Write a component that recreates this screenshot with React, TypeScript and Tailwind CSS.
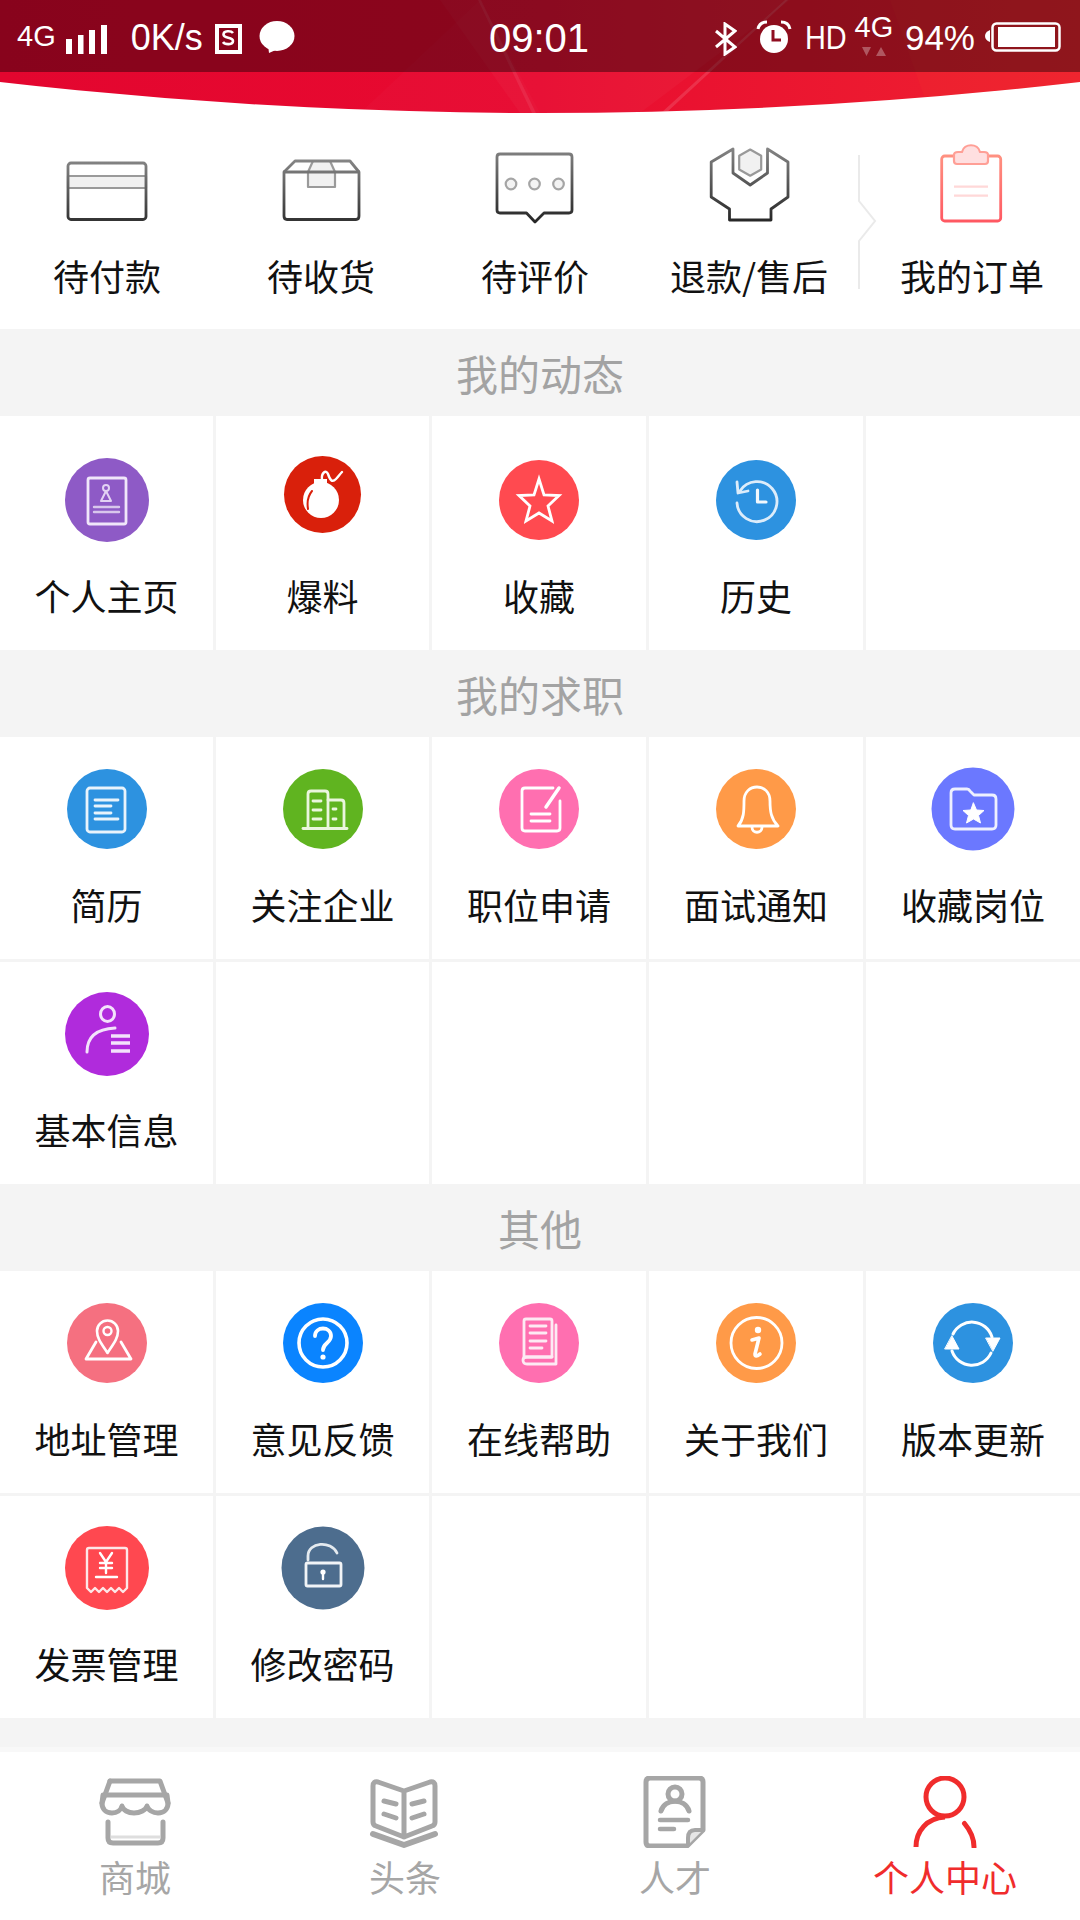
import React from "react";

const FONT = "font-['Noto_Sans_CJK_SC','Noto_Sans',sans-serif]";

function Bubble({ color, r, cx = 42, cy = 42, children }: { color: string; r: number; cx?: number; cy?: number; children: React.ReactNode }) {
  return (
    <svg viewBox="0 0 84 84" className="w-[84px] h-[84px] mb-[28px] shrink-0 overflow-visible" fill="none" stroke="#fff" strokeWidth={2.8} strokeLinecap="round" strokeLinejoin="round">
      <circle cx={cx} cy={cy} r={r} fill={color} stroke="none" />
      {children}
    </svg>
  );
}

const icons: Record<string, React.ReactNode> = {
  home: (
    <Bubble color="#8e5ac6" r={42}>
      <rect x="23" y="20" width="38" height="46" rx="2" stroke="#f0e6fa" strokeWidth="2.8" />
      <circle cx="41" cy="30" r="3" stroke="#e2d2f3" strokeWidth="2" />
      <path d="M41 33 L36 43 H46 Z" stroke="#e2d2f3" strokeWidth="2" />
      <path d="M29 49 H54 M29 54 H54" stroke="#d8c6ec" strokeWidth="2.4" />
    </Bubble>
  ),
  bomb: (
    <Bubble color="#d9200b" r={38.5} cy={36.5} cx={41.5}>
      <circle cx="40" cy="42" r="18" fill="#fff" stroke="none" />
      <rect x="33" y="21" width="13" height="6" fill="#fff" stroke="none" />
      <path d="M41 22 C40 15 45 11 47 16 C49 22 51 25 55 21 C57 19 59 16 61 14" strokeWidth="2.4" />
      <path d="M31 33 C26 39 26 45 27 51" stroke="#d9200b" strokeWidth="2" />
    </Bubble>
  ),
  star: (
    <Bubble color="#ff4a50" r={40}>
      <path d="M42 21 L47 37 L62 37.5 L51 48 L55 63 L42 55 L29 63 L33 48 L22 37.5 L37 37 Z" strokeWidth="2.8" strokeLinejoin="miter" />
    </Bubble>
  ),
  history: (
    <Bubble color="#2d92e0" r={40}>
      <path d="M26 33 A20 20 0 1 1 23 45" stroke="#dcecfa" strokeWidth="2.8" />
      <path d="M23 24 L24 35 L34 33" stroke="#dcecfa" strokeWidth="2.8" />
      <path d="M43.5 32 V44 H52" stroke="#f2f8fd" strokeWidth="3.2" />
    </Bubble>
  ),
  resume: (
    <Bubble color="#2d92e0" r={40}>
      <rect x="22" y="21" width="38" height="44" rx="3" stroke="#e8f3fc" />
      <path d="M30 33 H53 M30 39 H46 M30 46 H46 M30 52 H53" stroke="#e8f3fc" />
    </Bubble>
  ),
  company: (
    <Bubble color="#60b420" r={40}>
      <path d="M27 61 V27 Q27 24 30 24 H44 Q47 24 47 27 V61" stroke="#eaf6de" />
      <path d="M47 33 H60 Q63 33 63 36 V61" stroke="#eaf6de" />
      <path d="M22 61.5 H66" stroke="#eaf6de" />
      <path d="M32 34 H40 M32 43 H40 M32 52 H40 M52 42 H55 M52 52 H55" stroke="#eaf6de" strokeWidth="2.8" />
    </Bubble>
  ),
  apply: (
    <Bubble color="#ff6fb0" r={40}>
      <path d="M56 21 H28 Q25 21 25 24 V61 Q25 64 28 64 H60 Q63 64 63 61 V34" stroke="#fff" />
      <path d="M62 21 L49 40" strokeWidth="3.5" />
      <path d="M34 47 H53 M34 54 H53" strokeWidth="2.8" />
    </Bubble>
  ),
  bell: (
    <Bubble color="#ff9a48" r={40}>
      <path d="M24 59 C30 52 30 44 30 34 C30 25 36 20 43 20 C50 20 56 25 56 34 C56 44 57 52 64 59 Z" />
      <path d="M38 60 C38 67 48 67 48 60" />
    </Bubble>
  ),
  folder: (
    <Bubble color="#6b78ff" r={41.5}>
      <path d="M20 26 Q20 22 24 22 H36 Q38 22 39 24 L43 28 H61 Q65 28 65 32 V58 Q65 62 61 62 H24 Q20 62 20 58 Z" stroke="#eef0ff" strokeWidth="2.8" />
      <path d="M42.5 36 L45.5 43 L53 43.5 L47.5 48.5 L49.5 56 L42.5 52 L35.5 56 L37.5 48.5 L32 43.5 L39.5 43 Z" fill="#fff" stroke="#fff" strokeWidth="1" />
    </Bubble>
  ),
  info: (
    <Bubble color="#b02bdc" r={42}>
      <ellipse cx="42.5" cy="22" rx="7" ry="7.5" strokeWidth="3" stroke="#f3e2fb" />
      <path d="M22 60 C22 46 30 37 50 36" strokeWidth="3" stroke="#f3e2fb" />
      <path d="M46 44 H65 M46 51 H65 M46 59 H65" strokeWidth="3.4" strokeLinecap="butt" stroke="#f3e2fb" />
    </Bubble>
  ),
  map: (
    <Bubble color="#f57080" r={40}>
      <path d="M31 41 L21 58 H66 L56 41" stroke="#fff" strokeWidth="2.8" />
      <path d="M42.5 52 C36 42 32 37 32 30 A10.5 10.5 0 0 1 53 30 C53 37 49 42 42.5 52 Z" fill="#f57080" strokeWidth="2.6" />
      <circle cx="42.5" cy="30" r="4" strokeWidth="2.4" />
    </Bubble>
  ),
  question: (
    <Bubble color="#0a84ff" r={40}>
      <circle cx="42" cy="42" r="24" strokeWidth="3.6" />
      <path d="M34 35 C34 25 50 25 50 35 C50 42 42 42 42 49" strokeWidth="3.8" />
      <circle cx="42" cy="56" r="2.6" fill="#fff" stroke="none" />
    </Bubble>
  ),
  help: (
    <Bubble color="#ff6fb0" r={40}>
      <path d="M27 56 V20 Q27 18 29 18 H53 Q55 18 55 20 V56 Z" stroke="#fdeaf3" />
      <path d="M59 24 V63 H30 Q26 63 26 59 Q26 56 30 56 H55" stroke="#fdeaf3" />
      <path d="M33 25 H49 M33 32 H49 M33 40 H49 M33 47 H45" stroke="#fdeaf3" />
    </Bubble>
  ),
  about: (
    <Bubble color="#ff9a48" r={40}>
      <circle cx="42.5" cy="42" r="25.5" strokeWidth="2.8" />
      <circle cx="44" cy="29" r="3.2" fill="#fff" stroke="none" />
      <path d="M38 39 L45 37 L41 53 Q41 57 46 53" strokeWidth="3.6" />
    </Bubble>
  ),
  update: (
    <Bubble color="#2d92e0" r={40}>
      <path d="M22 33 A21 21 0 0 1 61 36" strokeWidth="3" />
      <path d="M60 52 A21 21 0 0 1 21 50" strokeWidth="3" />
      <path d="M55 37 L69 37 L62 50 Z" fill="#fff" stroke="#fff" strokeWidth="1" />
      <path d="M14 48 L28 48 L21 35 Z" fill="#fff" stroke="#fff" strokeWidth="1" />
    </Bubble>
  ),
  invoice: (
    <Bubble color="#ff4850" r={42}>
      <path d="M22 62 V24 Q22 22 24 22 H60 Q62 22 62 24 V62 L58 66 L54 62 L50 66 L46 62 L42 66 L38 62 L34 66 L30 62 L26 66 Z" stroke="#fde7e8" strokeWidth="2.4" />
      <path d="M35 27 L41 36 L47 27 M41 36 V47 M35 37 H47 M35 42 H47" strokeWidth="2.4" />
      <path d="M31 51 H52" strokeWidth="2.4" />
    </Bubble>
  ),
  lock: (
    <Bubble color="#4d6d8e" r={41.5}>
      <rect x="25" y="37" width="35" height="23" rx="1.5" stroke="#f1f4f7" />
      <path d="M27 34 V30 C27 16 50 14 56 27" stroke="#e4eaef" />
      <circle cx="42" cy="46" r="2.6" fill="#fff" stroke="none" />
      <path d="M42 47 V53" strokeWidth="2.4" />
    </Bubble>
  ),
};

type Cell = { label?: string; icon?: string };
const e: Cell = {};
const dynamic: Cell[] = [
  { label: "个人主页", icon: "home" },
  { label: "爆料", icon: "bomb" },
  { label: "收藏", icon: "star" },
  { label: "历史", icon: "history" },
  e,
];
const jobs: Cell[] = [
  { label: "简历", icon: "resume" },
  { label: "关注企业", icon: "company" },
  { label: "职位申请", icon: "apply" },
  { label: "面试通知", icon: "bell" },
  { label: "收藏岗位", icon: "folder" },
  { label: "基本信息", icon: "info" },
  e, e, e, e,
];
const others: Cell[] = [
  { label: "地址管理", icon: "map" },
  { label: "意见反馈", icon: "question" },
  { label: "在线帮助", icon: "help" },
  { label: "关于我们", icon: "about" },
  { label: "版本更新", icon: "update" },
  { label: "发票管理", icon: "invoice" },
  { label: "修改密码", icon: "lock" },
  e, e, e,
];

function Section({ title }: { title: string }) {
  return <div className="h-[87px] bg-[#f4f4f4] flex items-center justify-center text-[42px] leading-none text-[#a3a3a3]">{title}</div>;
}

function Grid({ cells, tall }: { cells: Cell[]; tall?: boolean }) {
  return (
    <div className="grid grid-cols-[213px_213px_214px_214px_1fr] gap-[3px] bg-[#f4f4f4]">
      {cells.map((c, i) => (
        <div key={i} className={`${tall ? "h-[234px]" : "h-[222px]"} bg-white flex flex-col items-center justify-end pb-[30px]`}>
          {c.icon && icons[c.icon]}
          {c.label && <div className="text-[36px] leading-[50px] text-[#111]">{c.label}</div>}
        </div>
      ))}
    </div>
  );
}

function OrderIcon({ id, from, to, children }: { id: string; from: string; to: string; children: React.ReactNode }) {
  return (
    <svg viewBox="0 0 100 90" className="w-[100px] h-[90px]" fill="none" stroke={`url(#${id})`} strokeWidth={2.8} strokeLinejoin="round">
      <defs>
        <linearGradient id={id} gradientUnits="userSpaceOnUse" x1="0" y1="5" x2="0" y2="85">
          <stop offset="0" stopColor={from} />
          <stop offset="1" stopColor={to} />
        </linearGradient>
      </defs>
      {children}
    </svg>
  );
}

const orders: { label: string; icon: React.ReactNode }[] = [
  {
    label: "待付款",
    icon: (
      <OrderIcon id="o1" from="#999" to="#2e2e2e">
        <path d="M11 36 H89 V48 H11 Z" fill="#f1f1f1" stroke="#9a9a9a" strokeWidth="2.2" />
        <rect x="11" y="23" width="78" height="56.5" rx="3" />
      </OrderIcon>
    ),
  },
  {
    label: "待收货",
    icon: (
      <OrderIcon id="o2" from="#999" to="#2e2e2e">
        <path d="M42 21 H59 L64 32 V47 H37 V32 Z" fill="#f1f1f1" stroke="#9a9a9a" strokeWidth="2.2" />
        <path d="M13 32 L24 21 H79 L88 32" />
        <path d="M13 32 H88 V76 Q88 79.5 85 79.5 H16 Q13 79.5 13 76 Z" />
      </OrderIcon>
    ),
  },
  {
    label: "待评价",
    icon: (
      <OrderIcon id="o3" from="#888" to="#222">
        <path d="M12 17 Q12 14 15 14 H84 Q87 14 87 17 V70 Q87 73 84 73 H59 L50 82 L41.5 73 H15 Q12 73 12 70 Z" />
        <g stroke="#a5a5a5" strokeWidth="2.2" fill="#f3f3f3">
          <circle cx="26" cy="44" r="5.3" />
          <circle cx="49.5" cy="44" r="5.3" />
          <circle cx="73.5" cy="44" r="5.3" />
        </g>
      </OrderIcon>
    ),
  },
  {
    label: "退款/售后",
    icon: (
      <OrderIcon id="o4" from="#888" to="#222">
        <path d="M34 9 V33 L51.2 45 L68.5 33 V9 L89 22 V57 L72 69 V80 H30.5 V69 L12.2 57 V22 Z" />
        <path d="M51.2 9.5 L62.2 15.7 V29.5 L51.2 35.7 L40.2 29.5 V15.7 Z" fill="#f1f1f1" stroke="#999" strokeWidth="2.2" />
      </OrderIcon>
    ),
  },
  {
    label: "我的订单",
    icon: (
      <OrderIcon id="o5" from="#ff9a86" to="#ff5560">
        <rect x="19.7" y="16" width="59" height="65" rx="3" />
        <path d="M32 15 Q32 12 36 12 H40 C42 3 56 3 58 12 H62 Q66 12 66 15 V21 Q66 24 63 24 H35 Q32 24 32 21 Z" fill="#ffdfe0" stroke="#ff9f96" strokeWidth="2.2" />
        <path d="M32 46.7 H66 M32 55.7 H66" stroke="#ffd8d8" strokeWidth="2.2" />
      </OrderIcon>
    ),
  },
];

const navStroke = { fill: "none", stroke: "#a6a6a6", strokeWidth: 5, strokeLinecap: "round" as const, strokeLinejoin: "round" as const };

const navItems: { label: string; active?: boolean; icon: React.ReactNode }[] = [
  {
    label: "商城",
    icon: (
      <g {...navStroke}>
        <path d="M15 5 H65 L73 27" />
        <path d="M15 5 L7 27" />
        <path d="M8 19 H72 L73 27 C73 33 69 37 63 37 C58 37 53 34 52 30 C51 34 45 37 39 37 C33 37 28 34 27 30 C26 34 22 37 17 37 C11 37 7 33 7 27 Z" />
        <path d="M13 46 V62 Q13 67 18 67 H63 Q68 67 68 62 V46" />
        <path d="M16 61 H65" stroke="#dedede" strokeWidth="3" strokeLinecap="butt" />
      </g>
    ),
  },
  {
    label: "头条",
    icon: (
      <g {...navStroke}>
        <path d="M39 15 L13 6 Q8 5 8 10 V46 Q8 49 11 50 L39 61 L67 50 Q70 49 70 46 V10 Q70 5 65 6 L39 15 Z M39 15 V61" />
        <path d="M8 58 L39 69 L70 58" strokeWidth="6" />
        <path d="M19 25 L31 28 M19 38 L31 42 M47 28 L59 25 M47 42 L59 38" />
      </g>
    ),
  },
  {
    label: "人才",
    icon: (
      <g {...navStroke}>
        <path d="M68 54 V6 Q68 2 64 2 H15 Q11 2 11 6 V66 Q11 70 15 70 H52 Z" />
        <path d="M68 54 H60 Q53 54 53 62 V69" strokeWidth="4" fill="#e6e6e6" />
        <circle cx="40" cy="18" r="7" />
        <path d="M26 35 C30 22 50 22 54 35" />
        <path d="M25 44 H53 M25 53 H39" strokeWidth="4.5" />
      </g>
    ),
  },
  {
    label: "个人中心",
    active: true,
    icon: (
      <g fill="none" stroke="#f02c2c" strokeWidth="5" strokeLinecap="round">
        <circle cx="40" cy="21" r="19" />
        <path d="M11 71 C11 55 22 42 40 41" strokeLinecap="butt" />
        <path d="M59.5 47.5 C65 54 69 62 69 71" />
      </g>
    ),
  },
];

function StatusBar() {
  const t = "font-['Liberation_Sans',Arial,sans-serif] text-white leading-none";
  return (
    <div className="relative h-[72px] bg-black/40 flex items-center pl-[17px] pr-[19px]">
      <div className="w-[472px] flex items-center">
        <span className={`${t} text-[29px]`}>4G</span>
        <svg viewBox="0 0 41 30" className="w-[41px] h-[30px] ml-[10px] mt-[8px]" fill="#fff">
          <rect x="0" y="14" width="6" height="15" />
          <rect x="12" y="10" width="5.5" height="19" />
          <rect x="23" y="5" width="6" height="24" />
          <rect x="35" y="0" width="6" height="29" />
        </svg>
        <span className={`${t} text-[36px] ml-[24px] mt-[3px]`}>0K/s</span>
        <svg viewBox="0 0 28 32" className="w-[28px] h-[32px] ml-[11px] mt-[3px]" fill="none">
          <path d="M2 4 H26 V30 H3 V2" stroke="#fff" strokeWidth="4" />
          <path d="M19 11 C17 8.5 9.5 8.5 9.5 12.5 C9.5 17 19 14.5 19 19 C19 23 11 23 9 20" stroke="#fff" strokeWidth="2.6" />
        </svg>
        <svg viewBox="0 0 36 32" className="w-[36px] h-[32px] ml-[17px] mt-[2px]" fill="#fff">
          <ellipse cx="18" cy="15" rx="17.5" ry="15" />
          <path d="M9 24 L10 32 L19 28 Z" />
        </svg>
      </div>
      <span className={`${t} text-[40px] mt-[3px]`}>09:01</span>
      <div className="flex-1 flex items-center justify-end">
        <svg viewBox="0 0 22 34" className="w-[22px] h-[34px] mt-[6px]" fill="none" stroke="#fff" strokeWidth="3">
          <path d="M1 9 L20 25 L10 32 V2 L20 9 L1 25" />
        </svg>
        <svg viewBox="0 0 36 34" className="w-[36px] h-[34px] ml-[19px] mt-[1px]">
          <circle cx="18" cy="19" r="14" fill="#fff" />
          <path d="M17 10 V20 H25" stroke="#8f0d20" strokeWidth="3" fill="none" />
          <path d="M2 9 C3 4 7 2 11 2 M34 9 C33 4 29 2 25 2" stroke="#fff" strokeWidth="3" fill="none" />
        </svg>
        <span className={`${t} text-[34px] ml-[13px] mt-[1px] scale-x-[0.85] origin-left w-[41px]`}>HD</span>
        <div className="ml-[9px] w-[38px] flex flex-col items-center -mt-[4px]">
          <span className={`${t} text-[29px]`}>4G</span>
          <svg viewBox="0 0 24 9" className="w-[24px] h-[9px] mt-[5px]" fill="#fff" fillOpacity="0.3">
            <path d="M0 0 H9 L4.5 9 Z M14 9 L19 0 L24 9 Z" />
          </svg>
        </div>
        <span className={`${t} text-[35px] ml-[12px] mt-[3px]`}>94%</span>
        <svg viewBox="0 0 76 30" className="w-[76px] h-[30px] ml-[10px] mt-[2px]">
          <path d="M5 8 V20 Q0 18 0 14 Q0 10 5 8 Z" fill="#fff" />
          <rect x="7.5" y="1.5" width="67" height="27" rx="4" fill="none" stroke="#fff" strokeWidth="2.5" />
          <rect x="13" y="5" width="57" height="20" fill="#fff" />
        </svg>
      </div>
    </div>
  );
}

export default function App() {
  return (
    <div className={`w-[1080px] h-[1920px] flex flex-col overflow-hidden bg-white ${FONT}`}>
      <header className="relative h-[113px] shrink-0 bg-gradient-to-r from-[#e3062f] via-[#e80a30] to-[#ef2030] [clip-path:circle(4719px_at_540px_-4606px)]">
        <svg className="absolute inset-0 w-full h-full" viewBox="0 0 1080 113" preserveAspectRatio="none">
          <polygon points="440,0 790,0 640,113 520,113" fill="#fff" opacity="0.03" />
          <polygon points="480,0 540,113 360,113" fill="#fff" opacity="0.02" />
          <polygon points="890,0 1080,0 1080,113 930,113" fill="#ff8a30" opacity="0.05" />
          <polygon points="785,0 788,0 666,113 661,113" fill="#fff" opacity="0.13" />
          <polygon points="478,0 481,0 536,113 532,113" fill="#fff" opacity="0.08" />
        </svg>
        <StatusBar />
      </header>

      <div className="grid grid-cols-[214px_214px_214px_214px_1fr] h-[216px] shrink-0">
        {orders.map((o, i) => (
          <div key={o.label} className={`relative flex flex-col items-center pt-[27px] ${i === 4 ? "pl-[8px]" : ""}`}>
            {o.icon}
            <div className="mt-[20px] text-[36px] leading-[50px] text-[#111]">{o.label}</div>
            {i === 4 && (
              <svg viewBox="0 0 20 134" className="absolute left-[2px] top-[42px] w-[20px] h-[134px]" fill="none" stroke="#eaeaea" strokeWidth="2">
                <path d="M1 0 V46 L17 66 L1 86 V134" />
              </svg>
            )}
          </div>
        ))}
      </div>

      <Section title="我的动态" />
      <Grid cells={dynamic} tall />
      <Section title="我的求职" />
      <Grid cells={jobs} />
      <Section title="其他" />
      <Grid cells={others} />

      <div className="flex-1 bg-[#f4f4f4] border-b-[5px] border-[#f8f8f8]" />

      <nav className="h-[168px] shrink-0 grid grid-cols-4 bg-white pt-[24px]">
        {navItems.map((n) => (
          <div key={n.label} className="flex flex-col items-center">
            <svg viewBox="0 0 80 72" className="w-[80px] h-[72px]">{n.icon}</svg>
            <div className={`mt-[3px] text-[36px] leading-[50px] ${n.active ? "text-[#f02c2c]" : "text-[#a6a6a6]"}`}>{n.label}</div>
          </div>
        ))}
      </nav>
    </div>
  );
}
